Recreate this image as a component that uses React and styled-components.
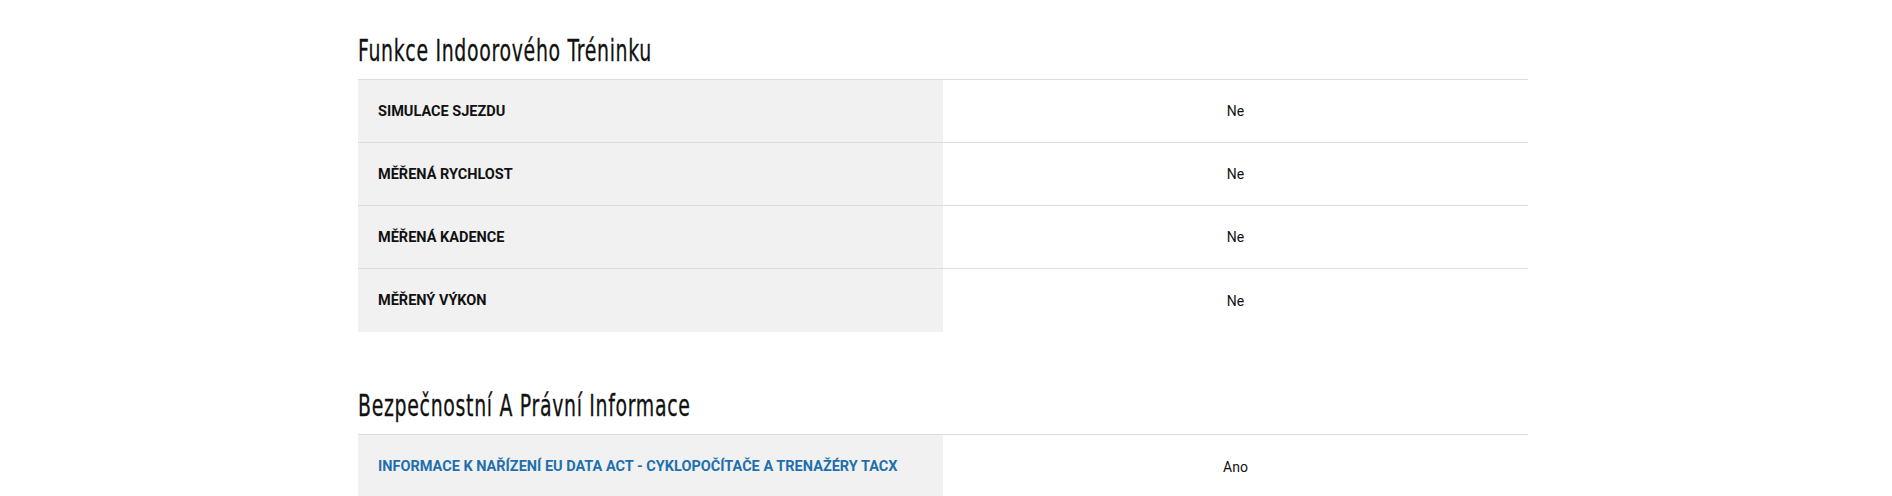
import React from 'react';
import styled, { createGlobalStyle } from 'styled-components';

const GlobalStyle = createGlobalStyle`
  body {
    margin: 0;
    background: #ffffff;
    font-family: Roboto, "Liberation Sans", sans-serif;
    color: #111111;
  }
`;

const Page = styled.div`
  width: 1170px;
  margin: 0 auto;
  padding-top: 32px;
  transform: translateX(-3px);
`;

const Section = styled.section`
  margin-bottom: 55px;
`;

const Title = styled.h2`
  margin: 0 0 11px 0;
  font-family: "DejaVu Sans Condensed", "DejaVu Sans", sans-serif;
  font-weight: normal;
  font-size: 31px;
  line-height: 36px;
  letter-spacing: 1px;
  color: #111111;
  white-space: nowrap;

  span {
    display: inline-block;
    transform: scaleX(0.678);
    transform-origin: left center;
    -webkit-text-stroke: 0.3px #111111;
  }
`;

const Table = styled.div`
  border-top: 1px solid #dddddd;
`;

const Row = styled.div`
  display: grid;
  grid-template-columns: 585px 1fr;
  height: 62px;
  border-bottom: 1px solid #dddddd;

  &:last-child {
    border-bottom: none;
    height: 63px;
  }
`;

const Label = styled.div`
  display: flex;
  align-items: center;
  padding-left: 20px;
  background: #f1f1f1;
  font-size: 14.5px;
  font-weight: 700;
  text-transform: uppercase;
  color: ${(p) => (p.$link ? '#1f6fae' : '#111111')};
`;

const Value = styled.div`
  display: flex;
  align-items: center;
  justify-content: center;
  font-size: 14px;
  color: #111111;
`;

const sections = [
  {
    title: 'Funkce Indoorového Tréninku',
    rows: [
      { label: 'Simulace sjezdu', value: 'Ne' },
      { label: 'Měřená rychlost', value: 'Ne' },
      { label: 'Měřená kadence', value: 'Ne' },
      { label: 'Měřený výkon', value: 'Ne' },
    ],
  },
  {
    title: 'Bezpečnostní A Právní Informace',
    rows: [
      {
        label: 'Informace k nařízení EU Data Act - cyklopočítače a trenažéry Tacx',
        value: 'Ano',
        link: true,
      },
    ],
  },
];

const App = () => {
  return (
    <>
      <GlobalStyle />
      <Page>
        {sections.map((s) => (
          <Section key={s.title}>
            <Title>
              <span>{s.title}</span>
            </Title>
            <Table>
              {s.rows.map((r) => (
                <Row key={r.label}>
                  <Label $link={r.link}>{r.label}</Label>
                  <Value>{r.value}</Value>
                </Row>
              ))}
            </Table>
          </Section>
        ))}
      </Page>
    </>
  );
};

export default App;
